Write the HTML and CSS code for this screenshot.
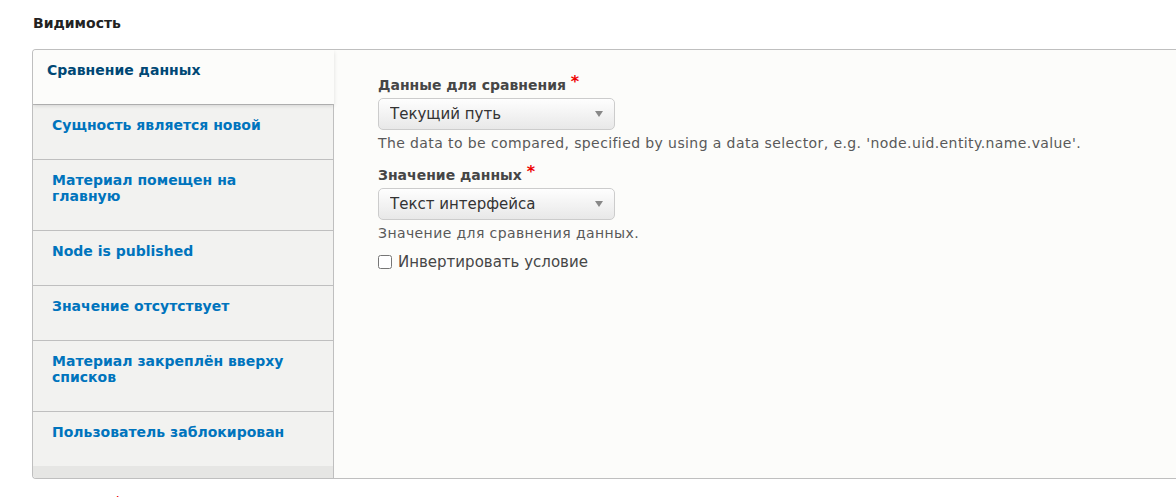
FILE: index.html
```html
<!DOCTYPE html>
<html lang="ru">
<head>
    <meta charset="UTF-8">
    <title>Видимость</title>
    <link rel="stylesheet" href="styles.css">
</head>
<body>

<div class="page">
    <h4 class="fieldset-title">Видимость</h4>

    <div class="vertical-tabs">
        <!-- Список условий -->
        <ul class="tabs-menu">
            <li class="tab active"><a href="#">Сравнение данных</a></li>
            <li class="tab"><a href="#">Сущность является новой</a></li>
            <li class="tab"><a href="#">Материал помещен на главную</a></li>
            <li class="tab"><a href="#">Node is published</a></li>
            <li class="tab"><a href="#">Значение отсутствует</a></li>
            <li class="tab"><a href="#">Материал закреплён вверху списков</a></li>
            <li class="tab"><a href="#">Пользователь заблокирован</a></li>
        </ul>

        <div class="tabs-pane">
            <div class="form-item">
                <label for="data">Данные для сравнения <span class="required">*</span></label>
                <div class="select">
                    <select id="data">
                        <option>Текущий путь</option>
                    </select>
                </div>
                <div class="description">The data to be compared, specified by using a data selector, e.g. 'node.uid.entity.name.value'.</div>
            </div>

            <div class="form-item">
                <label for="value">Значение данных <span class="required">*</span></label>
                <div class="select">
                    <select id="value">
                        <option>Текст интерфейса</option>
                    </select>
                </div>
                <div class="description">Значение для сравнения данных.</div>
            </div>

            <div class="form-check">
                <input type="checkbox" id="negate">
                <label for="negate">Инвертировать условие</label>
            </div>
        </div>
    </div>

    <div class="next-label">Название <span class="required">*</span></div>
</div>

</body>
</html>
```

FILE: styles.css
```css
html, body {
    margin: 0;
    padding: 0;
    background-color: #fff;
    overflow: hidden;
}
body {
    font-family: "DejaVu Sans", Verdana, sans-serif;
    color: #333;
}
.page {
    padding: 14px 0 0 32px;
}
.fieldset-title {
    margin: 0 0 17px 1px;
    font-size: 14px;
    line-height: 18px;
    font-weight: bold;
    color: #222;
}
.vertical-tabs {
    display: flex;
    height: 428px;
    border: 1px solid #bfbfbf;
    border-right: none;
    border-radius: 4px 0 0 4px;
    overflow: hidden;
}
.tabs-menu {
    list-style: none;
    margin: 0;
    padding: 0;
    width: 300px;
    flex-shrink: 0;
    background-color: #e6e6e4;
    border-right: 1px solid #bfbfbf;
}
.tab {
    border-top: 1px solid #bfbfbf;
    background-color: #f2f2f0;
}
.tab a {
    display: block;
    padding: 12px 40px 26px 19px;
    font-size: 14px;
    line-height: 16px;
    font-weight: bold;
    color: #0074bd;
    text-decoration: none;
}
.tab.active {
    border-top: none;
    background-color: #fcfcfa;
    margin-right: -1px;
    position: relative;
    z-index: 1;
    box-shadow: 0 2px 4px rgba(0, 0, 0, 0.12);
}
.tab.active a {
    padding: 12px 40px 26px 14px;
    color: #004875;
}
.tabs-pane {
    flex: 1;
    background-color: #fcfcfa;
    padding: 23px 0 0 44px;
}
.form-item {
    margin-bottom: 11px;
}
.form-item label {
    display: block;
    font-size: 14px;
    line-height: 18px;
    font-weight: bold;
    color: #464646;
    margin-bottom: 4px;
}
.required {
    color: #e00;
    font-size: 16px;
    vertical-align: 3px;
}
.select {
    position: relative;
    width: 237px;
}
.select select {
    -webkit-appearance: none;
    appearance: none;
    width: 100%;
    height: 32px;
    padding: 0 30px 0 11px;
    font-family: "DejaVu Sans", Verdana, sans-serif;
    font-size: 15px;
    color: #333;
    border: 1px solid #ccc;
    border-radius: 5px;
    background: linear-gradient(#fefefe, #e8e8e8);
}
.select::after {
    content: "";
    position: absolute;
    right: 12px;
    top: 13px;
    border-left: 4px solid transparent;
    border-right: 4px solid transparent;
    border-top: 6px solid #888;
}
.description {
    margin-top: 4px;
    font-size: 14px;
    line-height: 18px;
    letter-spacing: 0.4px;
    color: #595959;
}
.form-check {
    display: flex;
    align-items: center;
}
.form-check input {
    width: 14px;
    height: 14px;
    margin: 0 6px 0 0;
}
.form-check label {
    font-size: 15px;
    color: #464646;
}
.next-label {
    margin-top: 15px;
    font-size: 14px;
    line-height: 18px;
    font-weight: bold;
    color: #333;
}
.next-label .required {
    vertical-align: 7px;
}
```
